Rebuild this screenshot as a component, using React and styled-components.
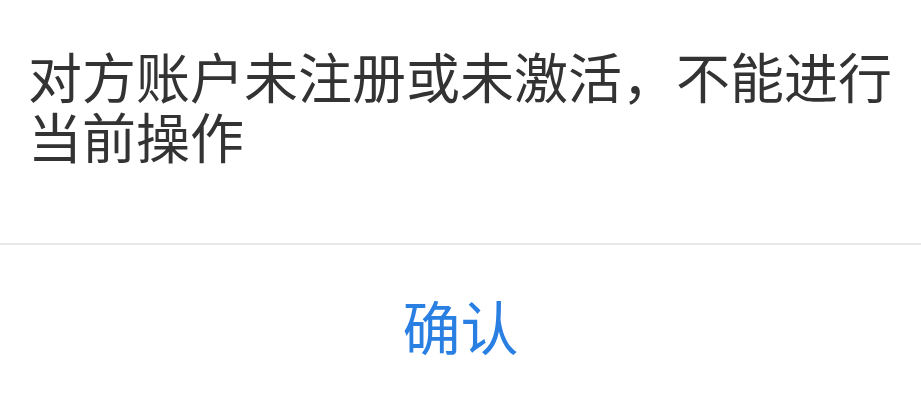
import React from "react";
import styled, { createGlobalStyle } from "styled-components";

const Global = createGlobalStyle`
  html, body { margin: 0; padding: 0; background: #ffffff; }
  body { font-family: "Noto Sans CJK SC", "Noto Sans", sans-serif; }
`;

const Dialog = styled.div`
  width: 921px;
  height: 405px;
  background: #ffffff;
  display: flex;
  flex-direction: column;
`;

const Message = styled.div`
  padding: 46px 28px 0 28px;
  height: 243px;
  box-sizing: border-box;
  font-size: 54px;
  line-height: 60px;
  color: #333333;
`;

const Divider = styled.div`
  height: 2px;
  background: #e9e9e9;
`;

const Action = styled.button`
  flex: 1;
  border: none;
  background: transparent;
  font-family: "Noto Sans CJK SC", sans-serif;
  font-size: 58px;
  color: #2a7fe2;
  display: flex;
  align-items: center;
  justify-content: center;
  padding: 0;
  cursor: pointer;
`;

export default function App() {
  return (
    <>
      <Global />
      <Dialog>
        <Message>对方账户未注册或未激活，不能进行当前操作</Message>
        <Divider />
        <Action>确认</Action>
      </Dialog>
    </>
  );
}
